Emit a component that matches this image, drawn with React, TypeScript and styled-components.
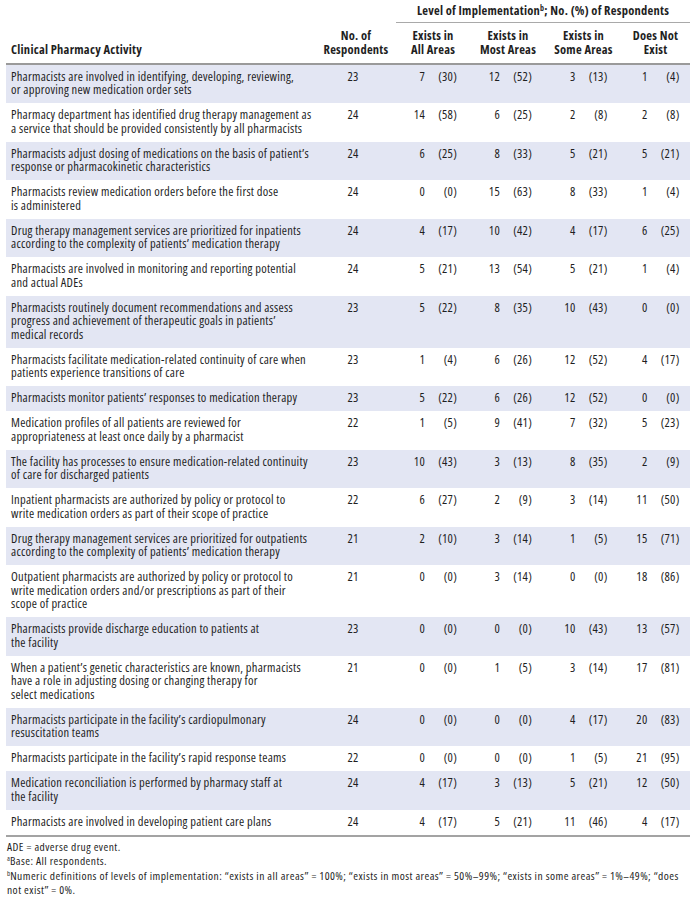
import React from "react";
import styled, { createGlobalStyle } from "styled-components";

const FONT = `"Open Sans", "Roboto Condensed", sans-serif`;

const GlobalStyle = createGlobalStyle`
  html, body { margin: 0; padding: 0; background: #ffffff; }
  body {
    color: #1f1f1f;
    font-family: ${FONT};
    font-stretch: 75%;
    font-weight: 400;
    -webkit-font-smoothing: antialiased;
  }
`;

type Level = [number, number];
type RowData = { lines: string[]; n: number; levels: Level[] };

const ROWS: RowData[] = [
  { lines: ["Pharmacists are involved in identifying, developing, reviewing,", "or approving new medication order sets"], n: 23, levels: [[7, 30], [12, 52], [3, 13], [1, 4]] },
  { lines: ["Pharmacy department has identified drug therapy management as", "a service that should be provided consistently by all pharmacists"], n: 24, levels: [[14, 58], [6, 25], [2, 8], [2, 8]] },
  { lines: ["Pharmacists adjust dosing of medications on the basis of patient\u2019s", "response or pharmacokinetic characteristics"], n: 24, levels: [[6, 25], [8, 33], [5, 21], [5, 21]] },
  { lines: ["Pharmacists review medication orders before the first dose", "is administered"], n: 24, levels: [[0, 0], [15, 63], [8, 33], [1, 4]] },
  { lines: ["Drug therapy management services are prioritized for inpatients", "according to the complexity of patients\u2019 medication therapy"], n: 24, levels: [[4, 17], [10, 42], [4, 17], [6, 25]] },
  { lines: ["Pharmacists are involved in monitoring and reporting potential", "and actual ADEs"], n: 24, levels: [[5, 21], [13, 54], [5, 21], [1, 4]] },
  { lines: ["Pharmacists routinely document recommendations and assess", "progress and achievement of therapeutic goals in patients\u2019", "medical records"], n: 23, levels: [[5, 22], [8, 35], [10, 43], [0, 0]] },
  { lines: ["Pharmacists facilitate medication-related continuity of care when", "patients experience transitions of care"], n: 23, levels: [[1, 4], [6, 26], [12, 52], [4, 17]] },
  { lines: ["Pharmacists monitor patients\u2019 responses to medication therapy"], n: 23, levels: [[5, 22], [6, 26], [12, 52], [0, 0]] },
  { lines: ["Medication profiles of all patients are reviewed for", "appropriateness at least once daily by a pharmacist"], n: 22, levels: [[1, 5], [9, 41], [7, 32], [5, 23]] },
  { lines: ["The facility has processes to ensure medication-related continuity", "of care for discharged patients"], n: 23, levels: [[10, 43], [3, 13], [8, 35], [2, 9]] },
  { lines: ["Inpatient pharmacists are authorized by policy or protocol to", "write medication orders as part of their scope of practice"], n: 22, levels: [[6, 27], [2, 9], [3, 14], [11, 50]] },
  { lines: ["Drug therapy management services are prioritized for outpatients", "according to the complexity of patients\u2019 medication therapy"], n: 21, levels: [[2, 10], [3, 14], [1, 5], [15, 71]] },
  { lines: ["Outpatient pharmacists are authorized by policy or protocol to", "write medication orders and/or prescriptions as part of their", "scope of practice"], n: 21, levels: [[0, 0], [3, 14], [0, 0], [18, 86]] },
  { lines: ["Pharmacists provide discharge education to patients at", "the facility"], n: 23, levels: [[0, 0], [0, 0], [10, 43], [13, 57]] },
  { lines: ["When a patient\u2019s genetic characteristics are known, pharmacists", "have a role in adjusting dosing or changing therapy for", "select medications"], n: 21, levels: [[0, 0], [1, 5], [3, 14], [17, 81]] },
  { lines: ["Pharmacists participate in the facility\u2019s cardiopulmonary", "resuscitation teams"], n: 24, levels: [[0, 0], [0, 0], [4, 17], [20, 83]] },
  { lines: ["Pharmacists participate in the facility\u2019s rapid response teams"], n: 22, levels: [[0, 0], [0, 0], [1, 5], [21, 95]] },
  { lines: ["Medication reconciliation is performed by pharmacy staff at", "the facility"], n: 24, levels: [[4, 17], [3, 13], [5, 21], [12, 50]] },
  { lines: ["Pharmacists are involved in developing patient care plans"], n: 24, levels: [[4, 17], [5, 21], [11, 46], [4, 17]] },
];

const LEVEL_HEADS = [
  ["Exists in", "All Areas"],
  ["Exists in", "Most Areas"],
  ["Exists in", "Some Areas"],
  ["Does Not", "Exist"],
];

const Page = styled.div`
  width: 684px;
  padding: 0 0 0 6px;
`;

const Table = styled.table`
  width: 684px;
  table-layout: fixed;
  border-collapse: separate;
  border-spacing: 0;
  font-size: 12.5px;
  letter-spacing: 0.25px;
  line-height: 13.5px;
`;

const GroupHead = styled.th`
  font-weight: 700;
  text-align: center;
  padding: 4px 0 4px;
  border-bottom: 1px solid #a9a9a9;
  white-space: nowrap;
`;

const Blank = styled.th`
  padding: 0;
`;

const ColHead = styled.th<{ $left?: boolean }>`
  font-weight: 700;
  text-align: ${(p) => (p.$left ? "left" : "center")};
  vertical-align: bottom;
  padding: 6px 0 5px ${(p) => (p.$left ? "5px" : "0")};
  line-height: 14.5px;
  border-bottom: 2px solid #9a9a9a;
  white-space: nowrap;
`;

const Sup = styled.sup`
  font-size: 8px;
  line-height: 0;
  vertical-align: 4px;
`;

const Row = styled.tr<{ $shaded: boolean }>`
  background: ${(p) => (p.$shaded ? "#e3e6f3" : "#ffffff")};
`;

const Cell = styled.td`
  vertical-align: top;
  padding: 5px 0 6.5px;
`;

const ActivityCell = styled(Cell)`
  padding-left: 5px;
  white-space: nowrap;
`;

const Line = styled.div`
  display: block;
`;

const CountCell = styled(Cell)`
  text-align: center;
  padding-right: 6px;
`;

const Pair = styled.div`
  display: grid;
  grid-template-columns: 16px 26px;
  column-gap: 6px;
  justify-content: center;
`;

const Num = styled.span`
  text-align: right;
`;

const Body = styled.tbody`
  tr:last-child td {
    border-bottom: 2px solid #a3a3a3;
  }
`;

const Notes = styled.div`
  margin-top: 3px;
  padding-left: 1px;
  font-size: 11.5px;
  letter-spacing: 0.44px;
  line-height: 14.6px;
  color: #1f1f1f;
  white-space: nowrap;
`;

const Note = styled.p`
  margin: 0;
`;

const NoteSup = styled.sup`
  font-size: 7px;
  line-height: 0;
  vertical-align: 4px;
  letter-spacing: 0;
`;

export default function App() {
  return (
    <Page>
      <GlobalStyle />
      <Table>
        <colgroup>
          <col style={{ width: 310 }} />
          <col style={{ width: 80 }} />
          <col style={{ width: 74 }} />
          <col style={{ width: 76 }} />
          <col style={{ width: 75 }} />
          <col style={{ width: 69 }} />
        </colgroup>
        <thead>
          <tr>
            <Blank colSpan={2} />
            <GroupHead colSpan={4}>
              Level of Implementation<Sup>b</Sup>; No. (%) of Respondents
            </GroupHead>
          </tr>
          <tr>
            <ColHead $left>Clinical Pharmacy Activity</ColHead>
            <ColHead>
              No. of
              <br />
              Respondents
            </ColHead>
            {LEVEL_HEADS.map((h) => (
              <ColHead key={h[1]}>
                {h[0]}
                <br />
                {h[1]}
              </ColHead>
            ))}
          </tr>
        </thead>
        <Body>
          {ROWS.map((r, i) => (
            <Row key={i} $shaded={i % 2 === 0}>
              <ActivityCell>
                {r.lines.map((l, j) => (
                  <Line key={j}>{l}</Line>
                ))}
              </ActivityCell>
              <CountCell>{r.n}</CountCell>
              {r.levels.map(([c, p], k) => (
                <Cell key={k}>
                  <Pair>
                    <Num>{c}</Num>
                    <Num>({p})</Num>
                  </Pair>
                </Cell>
              ))}
            </Row>
          ))}
        </Body>
      </Table>
      <Notes>
        <Note>ADE = adverse drug event.</Note>
        <Note>
          <NoteSup>a</NoteSup>Base: All respondents.
        </Note>
        <Note>
          <NoteSup>b</NoteSup>Numeric definitions of levels of implementation: {"\u201c"}exists in all areas{"\u201d"} = 100%; {"\u201c"}exists in most areas{"\u201d"} = 50%{"\u2013"}99%; {"\u201c"}exists in some areas{"\u201d"} = 1%{"\u2013"}49%; {"\u201c"}does
          <br />
          not exist{"\u201d"} = 0%.
        </Note>
      </Notes>
    </Page>
  );
}
